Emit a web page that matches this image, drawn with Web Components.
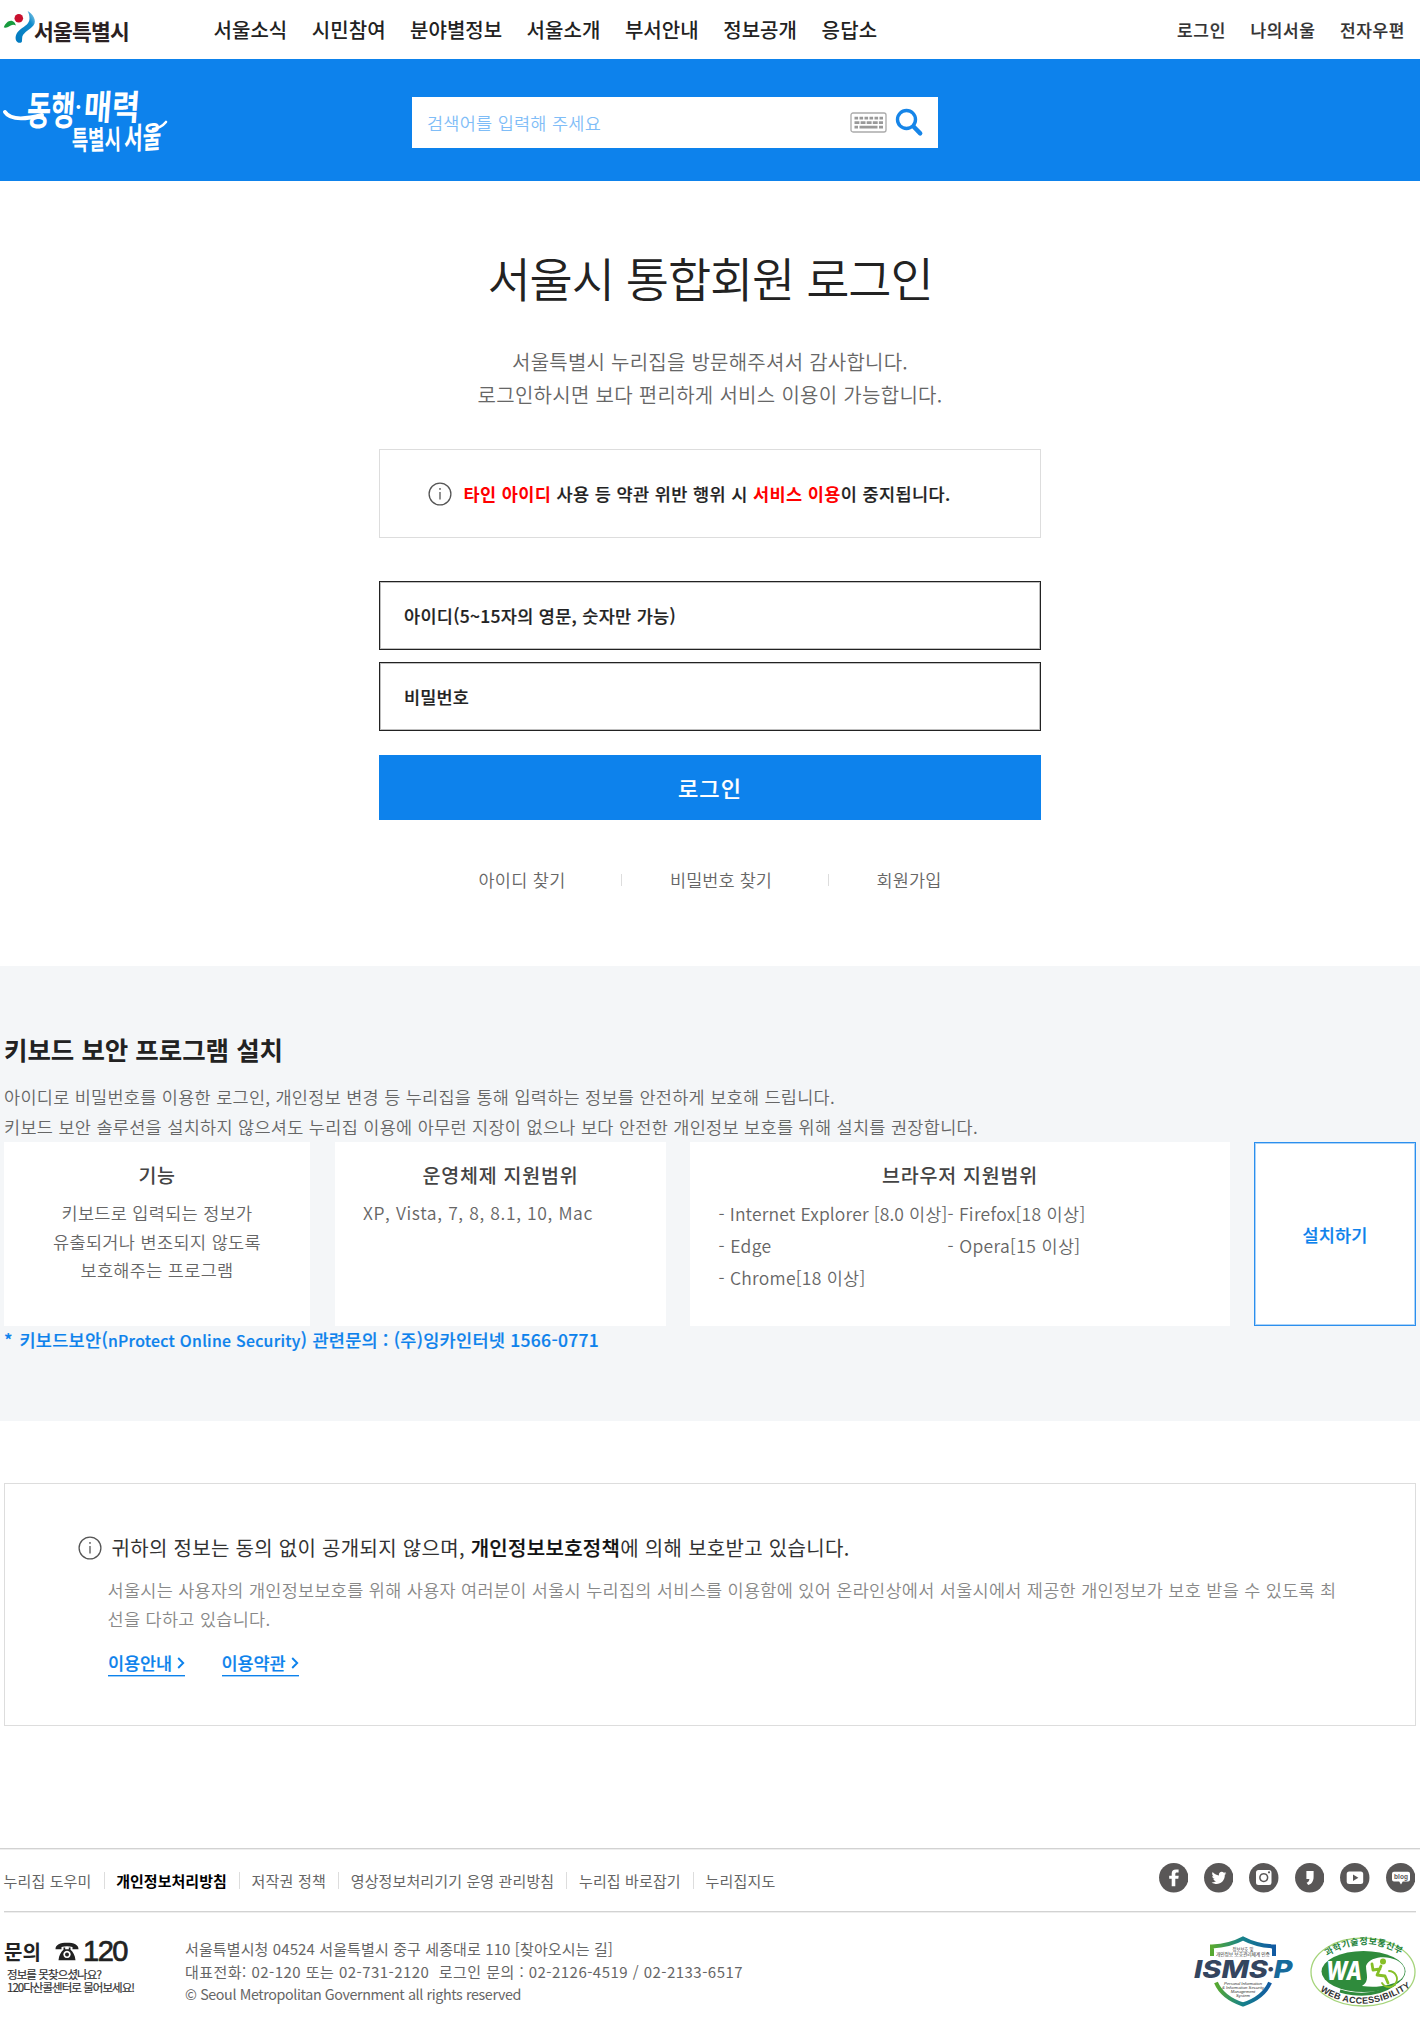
<!DOCTYPE html>
<html lang="ko">
<head>
<meta charset="utf-8">
<title>서울시 통합회원 로그인</title>
<style>
body{margin:0;width:1420px;height:2032px;overflow:hidden;background:#fff;color:#222;font-family:"Noto Sans CJK KR","Noto Sans",sans-serif}
</style>
</head>
<body>
<site-header></site-header>
<search-banner></search-banner>
<login-panel></login-panel>
<security-guide></security-guide>
<privacy-notice></privacy-notice>
<site-footer></site-footer>

<script>
const fits = [];
function define(name, css, html) {
  customElements.define(name, class extends HTMLElement {
    constructor() {
      super();
      this.attachShadow({mode: 'open'}).innerHTML =
        '<style>:host{display:block;box-sizing:border-box}*{box-sizing:border-box}h1,h2,h3,p{margin:0;font-weight:inherit}a{color:inherit;text-decoration:none}svg{display:block;overflow:visible}' + css + '</style>' + html;
    }
  });
}

/* One line of text tracked so that it spans the width in its "w" attribute. */
class FitText extends HTMLElement {
  constructor() {
    super();
    this.attachShadow({mode: 'open'}).innerHTML = '<style>:host{display:inline-block;white-space:pre;flex:none}</style><slot></slot>';
    fits.push(this);
  }
  fit() {
    this.style.letterSpacing = '0px';
    const n = [...this.textContent].length;
    const d = (Number(this.getAttribute('w')) - this.getBoundingClientRect().width) / n;
    this.style.letterSpacing = d.toFixed(3) + 'px';
  }
}
customElements.define('fit-text', FitText);

define('info-icon', ':host{width:24px;height:24px;flex:none}', `
<svg width="24" height="24" viewBox="0 0 24 24" fill="none" stroke="#555" stroke-width="1.3"><circle cx="12" cy="12" r="10.9"/><path d="M12 10v7.6"/><circle cx="12" cy="6.9" r=".9" fill="#555" stroke="none"/></svg>`);

define('seoul-logo', ':host{display:flex;width:133px;height:59px;font-size:21.500px;font-weight:700;color:#2b2122;line-height:61px}svg{flex:none}', `
<svg width="31" height="59" viewBox="3 0 31 59">
<defs><linearGradient id="g" x1="0" y1="1" x2="1" y2="0"><stop offset="0" stop-color="#0079bf"/><stop offset=".7" stop-color="#108bcb"/><stop offset="1" stop-color="#9bd3ec"/></linearGradient></defs>
<path d="M3.800 27.600C5.200 23 9 20 12.300 21c2 .7 3.200 2.600 3.600 4.600-1.600-1-3.500-1-5.200 0-2.100 1.300-4 2.500-6.900 2z" fill="#179b3e"/>
<circle cx="18.800" cy="18.300" r="4.300" fill="#c8102e"/>
<path d="M27.600 11c5.300 3 9.500 9.600 6 14.200-3.500 4.500-9.600 6.800-11.200 11-.4 1.900-.2 4-.6 5.800-1.800 1.600-4.600.8-5.600-1.200-1.700-4.300.5-8.800 4.300-11.600 4.500-3.300 8.800-5.300 9-10.500 0-3-.6-5.500-1.900-7.700z" fill="url(#g)"/>
</svg><fit-text w="95">서울특별시</fit-text>`);

define('site-header', `:host{display:flex;height:59px;padding:0 15px 0 3px;justify-content:space-between;line-height:59px}
nav{display:flex}.l{gap:24.500px;font-size:20px;font-weight:500;margin-left:77.500px;margin-right:auto}.r{gap:24.500px;font-size:17px;font-weight:500;color:#333;-webkit-text-stroke:.2px #333;line-height:59px}`, `
<seoul-logo></seoul-logo>
<nav class="l"><a><fit-text w="73.800">서울소식</fit-text></a><a><fit-text w="73.800">시민참여</fit-text></a><a><fit-text w="92">분야별정보</fit-text></a><a><fit-text w="73.800">서울소개</fit-text></a><a><fit-text w="73.800">부서안내</fit-text></a><a><fit-text w="73.800">정보공개</fit-text></a><a><fit-text w="56">응답소</fit-text></a></nav>
<nav class="r"><a><fit-text w="49">로그인</fit-text></a><a><fit-text w="65">나의서울</fit-text></a><a><fit-text w="65">전자우편</fit-text></a></nav>`);

define('search-field', `:host{display:flex;align-items:center;width:526px;height:51px;background:#fff;padding:0 15px 1px 15px;font-size:17.500px;color:#7fbdf7}
.k{margin-left:auto;margin-right:8px}fit-text{font-weight:350}`, `
<fit-text w="174">검색어를 입력해 주세요</fit-text>
<svg class="k" width="37" height="21" viewBox="0 0 37 21"><rect x="1" y="1" width="35" height="19" rx="2" fill="#fff" stroke="#aaa" stroke-width="1.300"/><g stroke="#999" stroke-width="2.800"><path d="M4.500 6.200h28.500" stroke-dasharray="3.600 1.400"/><path d="M4.500 10.700h28.500" stroke-dasharray="4.900 1.200"/><path d="M4.500 15.200h3.500m1.500 0h18m1.500 0h4"/></g></svg>
<svg width="28" height="28" viewBox="0 0 28 28" fill="none" stroke="#1685e8"><circle cx="11.500" cy="11.500" r="9" stroke-width="3.400"/><path d="M18.500 18.500l6.700 6.900" stroke-width="4.400" stroke-linecap="round"/></svg>`);

define('slogan-mark', ':host{width:170px;height:86px}text{fill:#fff;font-weight:700}', `
<svg width="170" height="86" viewBox="0 -16 170 86">
<g fill="none" stroke="#fff" stroke-linecap="round"><path d="M3 25c5 8 18 8 37 3" stroke-width="4"/></g>
<text transform="translate(24 38) skewX(-4)" font-size="40" textLength="48" lengthAdjust="spacingAndGlyphs">동행</text>
<circle cx="76.500" cy="20" r="2" fill="#fff"/>
<text transform="translate(81 33) skewX(-4)" font-size="35" textLength="56" lengthAdjust="spacingAndGlyphs">매력</text>
<text transform="translate(70 63) rotate(-1)" font-size="27" textLength="49" lengthAdjust="spacingAndGlyphs">특별시</text>
<text transform="translate(122 63) rotate(-4) skewX(-5)" font-size="30" textLength="37" lengthAdjust="spacingAndGlyphs">서울</text>
<path d="M151 42q8-1 13-7" fill="none" stroke="#fff" stroke-width="2.600" stroke-linecap="round"/>
</svg>`);

define('search-banner', ':host{display:flex;height:122px;background:#0d82ec;padding:12px 0 0 2px}search-field{margin:26px 0 0 240px}', `
<slogan-mark></slogan-mark><search-field></search-field>`);

define('text-field', ':host{height:69px;border:1px solid #222;box-shadow:inset 0 0 0 1px rgba(0,0,0,.25);padding:0 24px;font-size:17.500px;font-weight:500;-webkit-text-stroke:.2px #222;line-height:67px}', '<slot></slot>');

define('login-panel', `:host{height:785px;display:flex;flex-direction:column;align-items:center;text-align:center}
h1{font-size:47px;font-weight:350;line-height:60px;margin-top:66px;color:#222}
.sub{margin-top:38px;font-size:20px;line-height:33px;color:#666;font-weight:350;display:flex;flex-direction:column;align-items:center}
.box{width:662px;height:89px;border:1px solid #ddd;margin-top:38px;display:flex;align-items:center;padding:1px 0 0 48px;font-size:17.500px;font-weight:500;gap:11.500px;-webkit-text-stroke:.2px}
.box fit-text{position:relative;top:-1px}.box b{color:#f00;font-weight:700;-webkit-text-stroke:0}
form{width:662px;display:flex;flex-direction:column;margin-top:43px;text-align:left}
text-field+text-field{margin-top:12px}
button{margin-top:24px;height:65px;background:#0d82ec;border:0;color:#fff;font:500 22px/58px "Noto Sans CJK KR",sans-serif;padding:0 0 2px;-webkit-text-stroke:.2px}
.links{display:flex;align-items:center;margin-top:47px;height:26px;font-size:17.500px;line-height:26px;color:#666;font-weight:350}
i{width:1px;height:12px;background:#ddd;margin:0 48px 0 55.500px}`, `
<h1><fit-text w="445">서울시 통합회원 로그인</fit-text></h1>
<div class="sub"><fit-text w="396">서울특별시 누리집을 방문해주셔서 감사합니다.</fit-text><fit-text w="465">로그인하시면 보다 편리하게 서비스 이용이 가능합니다.</fit-text></div>
<div class="box"><info-icon></info-icon><fit-text w="487"><b>타인 아이디</b> 사용 등 약관 위반 행위 시 <b>서비스 이용</b>이 중지됩니다.</fit-text></div>
<form><text-field><fit-text w="272">아이디(5~15자의 영문, 숫자만 가능)</fit-text></text-field>
<text-field><fit-text w="65">비밀번호</fit-text></text-field>
<button type="button"><fit-text w="64">로그인</fit-text></button></form>
<div class="links"><fit-text w="87">아이디 찾기</fit-text><i></i><fit-text w="102">비밀번호 찾기</fit-text><i></i><fit-text w="65">회원가입</fit-text></div>`);

define('info-card', `:host{background:#fff;height:184px;padding-top:17px;font-size:17.500px;color:#666;font-weight:350;display:flex;flex-direction:column}
h3{text-align:center;font-size:19.500px;line-height:32px;color:#444;font-weight:500;margin-bottom:8px}`, '<h3><slot name="title"></slot></h3><slot></slot>');

define('security-guide', `:host{height:455px;background:#f4f6f8;padding:65px 4px 0}
h2{font-size:25.500px;font-weight:600;line-height:36px}
.t{display:flex;flex-direction:column;align-items:flex-start;margin:15px 0 0 0;font-size:17.500px;line-height:30px;color:#666;font-weight:350}
.cards{display:flex;align-items:flex-start}
.a{width:306px}.b{width:331px;margin-left:25px}.c{width:540px;margin-left:24px}
.f{display:flex;flex-direction:column;align-items:center;line-height:28.700px}
.o{padding-left:28px;line-height:28px}
.g{display:grid;grid-template-columns:229px 1fr;grid-auto-rows:32px;line-height:32px;padding-left:28.500px;margin-top:-1px}
.i{width:162px;height:184px;margin-left:24px;border:1px solid #2b8fee;box-shadow:inset 0 0 0 1px rgba(13,130,236,.35);background:#fff;color:#0d82ec;font-size:17.500px;font-weight:500;-webkit-text-stroke:.2px;display:flex;align-items:center;justify-content:center}
.q{color:#0d82ec;font-size:17.500px;line-height:28px;font-weight:500;-webkit-text-stroke:.2px}.e{font-size:15.800px}.s{margin-right:1.500px}`, `
<h2><fit-text w="279">키보드 보안 프로그램 설치</fit-text></h2>
<div class="t"><fit-text w="831">아이디로 비밀번호를 이용한 로그인, 개인정보 변경 등 누리집을 통해 입력하는 정보를 안전하게 보호해 드립니다.</fit-text><fit-text w="974">키보드 보안 솔루션을 설치하지 않으셔도 누리집 이용에 아무런 지장이 없으나 보다 안전한 개인정보 보호를 위해 설치를 권장합니다.</fit-text></div>
<div class="cards">
<info-card class="a"><fit-text slot="title" w="37">기능</fit-text><div class="f"><fit-text w="191">키보드로 입력되는 정보가</fit-text><fit-text w="208">유출되거나 변조되지 않도록</fit-text><fit-text w="153">보호해주는 프로그램</fit-text></div></info-card>
<info-card class="b"><fit-text slot="title" w="156">운영체제 지원범위</fit-text><div class="o"><fit-text w="230">XP, Vista, 7, 8, 8.1, 10, Mac</fit-text></div></info-card>
<info-card class="c"><fit-text slot="title" w="156">브라우저 지원범위</fit-text><div class="g">
<span><fit-text w="229">- Internet Explorer [8.0 이상]</fit-text></span><span><fit-text w="138">- Firefox[18 이상]</fit-text></span>
<span><fit-text w="53">- Edge</fit-text></span><span><fit-text w="133">- Opera[15 이상]</fit-text></span>
<span><fit-text w="147">- Chrome[18 이상]</fit-text></span></div></info-card>
<a class="i"><fit-text w="65">설치하기</fit-text></a></div>
<p class="q"><fit-text w="595"><span class="s">*</span> 키보드보안(<span class="e">nProtect Online Security</span>) 관련문의 : (주)잉카인터넷 1566-0771</fit-text></p>`);

define('more-link', `:host{display:flex;align-items:center;height:24px;line-height:22px;border-bottom:1px solid #0d82ec;box-shadow:0 1px 0 rgba(13,130,236,.4);color:#0d82ec;font-size:17.500px;font-weight:500;-webkit-text-stroke:.2px;gap:5px}`, `
<slot></slot><svg width="8" height="12" viewBox="0 0 8 12" fill="none" stroke="#0d82ec" stroke-width="1.900"><path d="M1.200 1l5 5-5 5"/></svg>`);

define('privacy-notice', `:host{width:1412px;height:243px;margin:61.500px 4px 0;border:1px solid #ddd;padding:49px 0 0 73px}
.h{display:flex;align-items:center;height:30px;font-size:20px;gap:9.500px;color:#333;line-height:28px}b{font-weight:500;color:#111;-webkit-text-stroke:.2px}
.p{display:flex;flex-direction:column;align-items:flex-start;margin:12px 0 0 29.500px;font-size:17.500px;line-height:29.500px;color:#888;font-weight:350}
.l{display:flex;gap:36.500px;margin:18px 0 0 30px}`, `
<div class="h"><info-icon></info-icon><fit-text w="738">귀하의 정보는 동의 없이 공개되지 않으며, <b>개인정보보호정책</b>에 의해 보호받고 있습니다.</fit-text></div>
<div class="p"><fit-text w="1229">서울시는 사용자의 개인정보보호를 위해 사용자 여러분이 서울시 누리집의 서비스를 이용함에 있어 온라인상에서 서울시에서 제공한 개인정보가 보호 받을 수 있도록 최</fit-text><fit-text w="163">선을 다하고 있습니다.</fit-text></div>
<div class="l"><more-link><fit-text w="64">이용안내</fit-text></more-link><more-link><fit-text w="64">이용약관</fit-text></more-link></div>`);

const glyphs = {
  facebook: '<path d="M16.300 23.300v-7.500h3l.4-3h-3.400v-1.700c0-1.200.5-1.700 1.600-1.700h1.700V6.400h-2.600c-2.900 0-4.300 1.500-4.300 4.100v2.300h-2.500v3h2.500v7.500z"/>',
  twitter: '<path d="M22.300 10.200c-.6.300-1.100.4-1.800.5.700-.4 1.100-1 1.300-1.700-.6.400-1.200.6-1.900.7-2-2-5.500-.4-5 2.700-2.600-.1-4.800-1.300-6.300-3.300-.9 1.600-.4 3.300 1 4.200-.5 0-1-.2-1.400-.4.100 1.600 1 2.600 2.500 3h-1.400c.4 1.200 1.500 2.100 2.900 2.200-1.300 1-2.900 1.400-4.600 1.300 6 3.700 13.500.2 13.200-7.600.6-.4 1.100-.9 1.500-1.600z"/>',
  instagram: '<path fill-rule="evenodd" d="M9.500 7h10.500a2.500 2.500 0 0 1 2.500 2.500v10a2.500 2.500 0 0 1-2.500 2.500h-10.500a2.500 2.500 0 0 1-2.500-2.500v-10a2.500 2.500 0 0 1 2.500-2.500zM14.750 10a4.600 4.600 0 1 0 .01 0z"/><circle cx="14.750" cy="14.600" r="3.100"/><circle cx="20" cy="9.300" r="1.100" fill="#595757"/>',
  story: '<path d="M11.400 8h7.200v5.700c0 4.600-2 7.200-5.400 8.200l-1.600-2.100c1.600-.7 2.600-2 2.800-3.900h-3z"/>',
  youtube: '<rect x="6.700" y="8.600" width="16.500" height="12.400" rx="2.500"/><path d="M13 11.600v6.400l5.400-3.200z" fill="#595757"/>',
  blog: '<path d="M8 8.700h14a2 2 0 0 1 2 2v5.800a2 2 0 0 1-2 2h-5.200L15 21.500l-1.800-3H8a2 2 0 0 1-2-2v-5.800a2 2 0 0 1 2-2z"/><text x="15" y="15.600" font-size="6.500" font-weight="700" text-anchor="middle" textLength="14" fill="#595757" font-family="Liberation Sans,sans-serif">blog</text>'
};
customElements.define('sns-icon', class extends HTMLElement {
  constructor() {
    super();
    this.attachShadow({mode: 'open'}).innerHTML = '<style>:host{display:block;width:29.500px;height:29.500px}svg{display:block}</style><svg width="29.500" height="29.500" viewBox="0 0 29.500 29.500" fill="#fff"><circle cx="14.750" cy="14.750" r="14.700" fill="#595757"/>' + glyphs[this.getAttribute('name')] + '</svg>';
  }
});

define('call-center', ':host{width:181px;color:#222}.t{display:flex;align-items:center;height:28px;font-weight:600;font-size:20px}.t fit-text:first-child{line-height:28px}.n{font:400 29px/25px "Liberation Sans",sans-serif;-webkit-text-stroke:.7px #222}svg{margin:0 4px 0 14px}.s{font-size:11.500px;line-height:13.300px;font-weight:400;color:#333;-webkit-text-stroke:.2px;padding-left:3px;display:flex;flex-direction:column;align-items:flex-start;margin-top:2.500px}', `
<div class="t"><fit-text w="37">문의</fit-text><svg width="24" height="19" viewBox="0 0 24 19" fill="#222"><path d="M.5 7.200C.5 2.500 5 .7 12 .7s11.500 1.800 11.500 6.500h-6V5c-3.600-1-7.400-1-11 0v2.200z"/><path fill-rule="evenodd" d="M8.500 5.500h1.700v1.800h3.600V5.500h1.700v2.200c2.500 2 4.600 5.500 5 10.600H3.500c.4-5.100 2.500-8.600 5-10.600zM12 8.700a3.700 3.700 0 1 0 .01 0z"/><circle cx="12" cy="12.400" r="2"/></svg><fit-text class="n" w="44">120</fit-text></div>
<div class="s"><fit-text w="94">정보를 못찾으셨나요?</fit-text><fit-text w="127">120다산콜센터로 물어보세요!</fit-text></div>`);

define('isms-mark', ':host{width:98px;height:72px}', `
<svg width="98" height="72" viewBox="0 0 98 72">
<defs><linearGradient id="s"><stop offset="0" stop-color="#58a92f"/><stop offset=".5" stop-color="#16818c"/><stop offset="1" stop-color="#115aa2"/></linearGradient></defs>
<g fill="none" stroke="url(#s)" stroke-width="4"><path d="M17 20v-9.500q18-1 31-8 13 7 31 8v9.500"/><path d="M21 46.500c5 12 15 18 27 22 12-4 22-10 27-22"/></g>
<g font-family="Noto Sans CJK KR" text-anchor="middle" fill="#333"><text x="48" y="14.500" font-size="4.800" textLength="21" lengthAdjust="spacingAndGlyphs">정보보호 및</text><text x="48" y="20.200" font-size="4.800" textLength="54">개인정보 보호관리체계 인증</text></g>
<g font-family="Inter,sans-serif" font-style="italic" font-weight="800" font-size="25" fill="#34455f"><text x="-1" y="42"><tspan textLength="74" lengthAdjust="spacingAndGlyphs">ISMS</tspan><tspan x="71">·</tspan><tspan x="78.500" textLength="19" lengthAdjust="spacingAndGlyphs" fill="#176a9b">P</tspan></text></g>
<g font-family="Liberation Sans" font-style="italic" text-anchor="middle" font-size="4.200" fill="#333"><text x="48" y="49" textLength="38">Personal Information</text><text x="48" y="53" textLength="42">&amp; Information Security</text><text x="48" y="57">Management</text><text x="48" y="61">System</text></g>
</svg>`);

define('wa-mark', ':host{width:106px;height:70px}', `
<svg width="106" height="70" viewBox="0 0 106 70">
<ellipse cx="53" cy="35" rx="52" ry="34" fill="#fff" stroke="#a5d47a" stroke-width="1.300"/>
<ellipse cx="53.500" cy="34.500" rx="42" ry="20.500" fill="#2f8b3c"/>
<path d="M30 54q32 9 55-7" fill="none" stroke="#2f8b3c" stroke-width="3"/>
<path d="M56 29c3-8 15-10 24-8 15 3 19 15 10 22-9 6-24 8-38 6 8-5 4-12 4-20z" fill="#fff"/>
<text x="16" y="42.500" font-family="Inter,sans-serif" font-style="italic" font-weight="800" font-size="26" textLength="36" lengthAdjust="spacingAndGlyphs" fill="#fff">WA</text>
<g fill="none" stroke="#86bf27" stroke-width="2.800" stroke-linecap="round" stroke-linejoin="round"><path d="M71 29l-4 9 8 1 3 7M70 32l-7 1-1-6"/><path d="M79 34a8 8 0 1 1-7 12" stroke-width="1.800"/></g><circle cx="73" cy="24.500" r="3" fill="#86bf27"/>
<path id="u" d="M17 19.500Q53-4 92 18" fill="none"/><path id="d" d="M10 53.500Q53 82 102 49" fill="none"/>
<text font-size="9" font-weight="700" fill="#25833d" font-family="Noto Sans CJK KR"><textPath href="#u" textLength="78">과학기술정보통신부</textPath></text>
<text font-size="9" font-weight="700" fill="#333" font-family="Liberation Sans"><textPath href="#d" textLength="97">WEB ACCESSIBILITY</textPath></text>
</svg>`);

define('site-footer', `:host{margin-top:122.500px;border-top:1px solid #d2d2d2;box-shadow:inset 0 1px 0 #eee;color:#666;font-size:15px}
.m{height:62.500px;margin:0 4px;border-bottom:1px solid #d2d2d2;box-shadow:0 1px 0 #eee;display:flex;align-items:center;justify-content:space-between}
nav{display:flex;align-items:center;line-height:24px;padding-top:2px;margin-left:-.500px}
i{width:1px;height:17px;background:#ddd;margin:0 11.700px 0 12px}b{color:#000;font-weight:700}
.n{display:flex;gap:15.900px;margin:0 1px 4px 0}
.f{display:flex;padding:25px 4px 0}call-center{margin-top:1px}.d{display:flex;flex-direction:column;align-items:flex-start;line-height:23px}.d :last-child{font-size:14.300px;line-height:21px}
isms-mark{margin-left:auto;margin-top:-1px}wa-mark{margin-left:17px}`, `
<div class="m"><nav><fit-text w="88">누리집 도우미</fit-text><i></i><b><fit-text w="110.700">개인정보처리방침</fit-text></b><i></i><fit-text w="74.500">저작권 정책</fit-text><i></i><fit-text w="203.500">영상정보처리기기 운영 관리방침</fit-text><i></i><fit-text w="101.800">누리집 바로잡기</fit-text><i></i><fit-text w="70">누리집지도</fit-text></nav>
<div class="n"><sns-icon name="facebook"></sns-icon><sns-icon name="twitter"></sns-icon><sns-icon name="instagram"></sns-icon><sns-icon name="story"></sns-icon><sns-icon name="youtube"></sns-icon><sns-icon name="blog"></sns-icon></div></div>
<div class="f"><call-center></call-center><div class="d"><fit-text w="428">서울특별시청 04524 서울특별시 중구 세종대로 110 [찾아오시는 길]</fit-text><fit-text w="558">대표전화: 02-120 또는 02-731-2120  로그인 문의 : 02-2126-4519 / 02-2133-6517</fit-text><fit-text w="336">© Seoul Metropolitan Government all rights reserved</fit-text></div><isms-mark></isms-mark><wa-mark></wa-mark></div>`);

fits.forEach(f => f.fit());
</script>
</body>
</html>
